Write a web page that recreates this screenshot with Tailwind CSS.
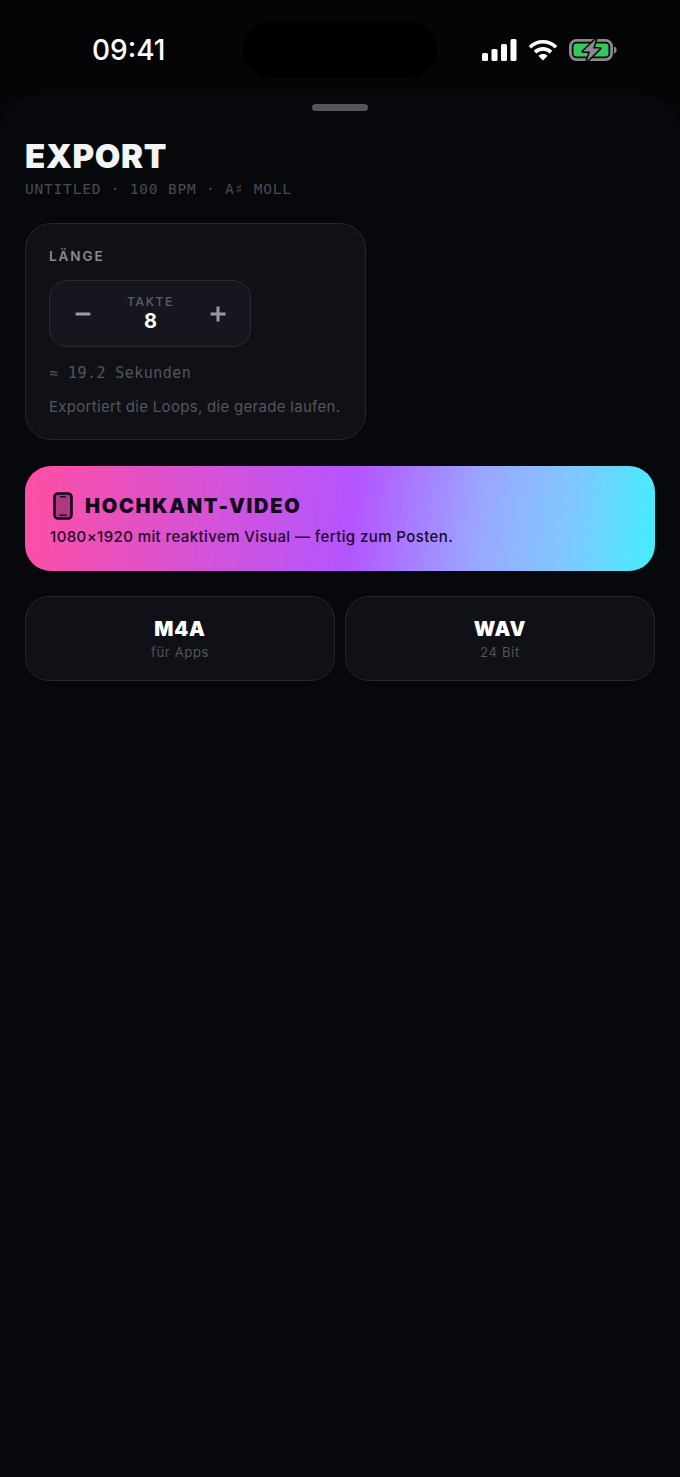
<!DOCTYPE html>
<html lang="en">
<head>
    <meta charset="UTF-8">
    <meta name="viewport" content="width=device-width, initial-scale=1.0">
    <title>Export</title>
    <script src="https://cdn.jsdelivr.net/npm/@tailwindcss/browser@4"></script>
</head>
<body class="bg-[#050507] font-['Inter',sans-serif]">
    <div class="relative w-[680px] h-[1477px] flex flex-col overflow-hidden">
        <!-- dynamic island -->
        <div class="absolute left-[243px] top-[22px] w-[194px] h-[56px] rounded-[28px] bg-black"></div>

        <!-- status bar -->
        <div class="h-[95px] shrink-0 flex items-start justify-between pl-[92px] pr-[63px] pt-[33px]">
            <span class="text-[28px] leading-[34px] font-medium text-white">09:41</span>
            <div class="flex items-center gap-[11px] pt-[5px]">
                <svg width="35" height="22" viewBox="0 0 35 22" fill="#fff">
                    <rect x="0" y="14" width="6" height="8" rx="1.5"/>
                    <rect x="9.5" y="10" width="6" height="12" rx="1.5"/>
                    <rect x="19" y="5" width="6" height="17" rx="1.5"/>
                    <rect x="28.5" y="0" width="6" height="22" rx="1.5"/>
                </svg>
                <svg width="30" height="22" viewBox="0 0 30 22" fill="none" stroke="#fff" stroke-width="3.6">
                    <path d="M2 8.2C9.5 1 20.5 1 28 8.2"/>
                    <path d="M7 13.2C11.8 8.8 18.2 8.8 23 13.2"/>
                    <path d="M15 21.5l-4.6-4.8c2.6-2.2 6.6-2.2 9.2 0z" fill="#fff" stroke="none"/>
                </svg>
                <svg width="48" height="24" viewBox="0 0 48 24" fill="none">
                    <rect x="1.4" y="2.4" width="41.2" height="19.2" rx="6" stroke="#8a8a8e" stroke-width="2.8"/>
                    <rect x="4.5" y="5.5" width="35" height="13" rx="3" fill="#34c759"/>
                    <path d="M45 8.5c1.8.6 2.6 1.9 2.6 3.5s-.8 2.9-2.6 3.5z" fill="#8a8a8e"/>
                    <path d="M27 1L14 13.5h7L18 23l13-12.5h-7z" fill="#8a8a8e" stroke="#050507" stroke-width="3" stroke-linejoin="round" paint-order="stroke"/>
                </svg>
            </div>
        </div>

        <!-- sheet -->
        <div class="flex-1 rounded-t-[36px] bg-[#07080c] px-[25px] pt-[9px]">
            <div class="mx-auto w-[56px] h-[7px] rounded-full bg-[#55555d]"></div>

            <h1 class="mt-[25px] text-[33px] leading-[40px] font-black tracking-[0.02em] text-[#f4f4f5]">EXPORT</h1>
            <p class="mt-[3px] font-['DejaVu_Sans_Mono',monospace] text-[14.5px] leading-[20px] tracking-[0.055em] text-[#4a4a50]">UNTITLED · 100 BPM · A♯ MOLL</p>

            <!-- length card -->
            <div class="mt-[24px] w-[341px] h-[217px] rounded-[26px] border border-[#26262c] bg-[#101116] px-[23px] pt-[23px]">
                <div class="text-[13.5px] leading-[18px] font-semibold tracking-[0.14em] text-[#8a8a92]">LÄNGE</div>
                <div class="mt-[15px] w-[202px] h-[67px] rounded-[18px] border border-[#2b2b32] bg-[#16171e] flex items-center justify-between pl-[25px] pr-[24px]">
                    <svg width="16" height="16" viewBox="0 0 16 16"><rect x="0.5" y="6.5" width="15" height="3" rx="1" fill="#9a9aa2"/></svg>
                    <div class="flex flex-col items-center">
                        <span class="text-[12px] leading-[14px] font-medium tracking-[0.14em] text-[#5e5e67]">TAKTE</span>
                        <span class="text-[20px] leading-[24px] font-bold text-white">8</span>
                    </div>
                    <svg width="16" height="16" viewBox="0 0 16 16"><path d="M6.5 0.5h3v6h6v3h-6v6h-3v-6h-6v-3h6z" fill="#9a9aa2"/></svg>
                </div>
                <div class="mt-[16px] font-['DejaVu_Sans_Mono',monospace] text-[15px] leading-[20px] tracking-[0.03em] text-[#55555b]">≈ 19.2 Sekunden</div>
                <div class="mt-[14px] text-[15px] leading-[20px] tracking-[0.02em] text-[#55555b]">Exportiert die Loops, die gerade laufen.</div>
            </div>

            <!-- hero export -->
            <div class="mt-[26px] h-[105px] rounded-[26px] bg-[linear-gradient(97deg,#ff4fa3_0%,#b455ff_52%,#9aa8ff_72%,#7fc8ff_86%,#42eeff_100%)] px-[25px] pt-[26px]">
                <div class="ml-[3px] flex items-center gap-[12px]">
                    <svg width="20" height="28" viewBox="0 0 20 28" fill="none">
                        <rect x="1.5" y="1.5" width="17" height="25" rx="3.5" fill="#0b0612" fill-opacity="0.3" stroke="#14071a" stroke-width="2.6"/>
                        <rect x="7" y="4" width="6" height="1.6" rx="0.8" fill="#14071a"/>
                        <rect x="6" y="22.4" width="8" height="1.6" rx="0.8" fill="#14071a"/>
                    </svg>
                    <span class="text-[20px] leading-[28px] font-black tracking-[0.085em] text-[#14071a]">HOCHKANT-VIDEO</span>
                </div>
                <div class="mt-[7px] text-[15px] leading-[20px] font-medium tracking-[0.027em] text-[#1a0a24]">1080×1920 mit reaktivem Visual — fertig zum Posten.</div>
            </div>

            <!-- format buttons -->
            <div class="mt-[25px] grid grid-cols-2 gap-[10px]">
                <div class="h-[85px] rounded-[24px] border border-[#26262c] bg-[#101116] flex flex-col items-center justify-center gap-[2px]">
                    <span class="text-[20px] leading-[24px] font-black tracking-[0.04em] text-white">M4A</span>
                    <span class="text-[13px] leading-[18px] tracking-[0.05em] text-[#55555b]">für Apps</span>
                </div>
                <div class="h-[85px] rounded-[24px] border border-[#26262c] bg-[#101116] flex flex-col items-center justify-center gap-[2px]">
                    <span class="text-[20px] leading-[24px] font-black tracking-[0.04em] text-white">WAV</span>
                    <span class="text-[13px] leading-[18px] tracking-[0.05em] text-[#55555b]">24 Bit</span>
                </div>
            </div>
        </div>
    </div>
</body>
</html>
